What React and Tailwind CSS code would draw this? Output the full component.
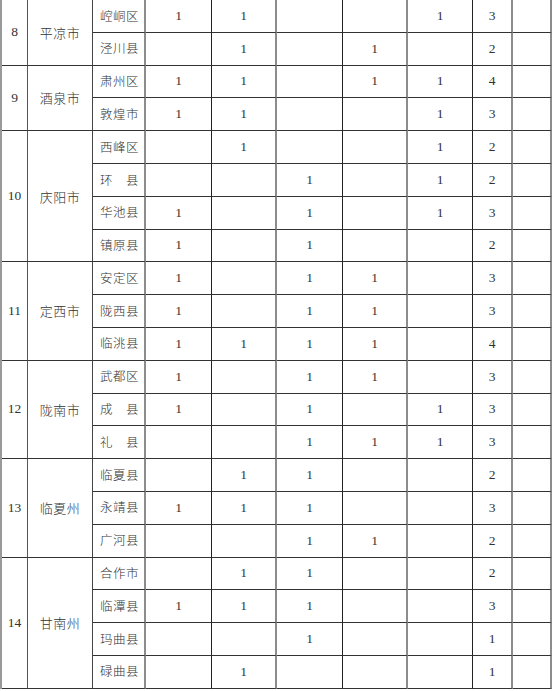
import React from "react";

const groups = [
  { idx: 8, city: "平凉市", rows: [["崆峒区", [1, 1, 0, 0, 1], 3], ["泾川县", [0, 1, 0, 1, 0], 2]] },
  { idx: 9, city: "酒泉市", rows: [["肃州区", [1, 1, 0, 1, 1], 4], ["敦煌市", [1, 1, 0, 0, 1], 3]] },
  {
    idx: 10,
    city: "庆阳市",
    rows: [
      ["西峰区", [0, 1, 0, 0, 1], 2],
      ["环　县", [0, 0, 1, 0, 1], 2],
      ["华池县", [1, 0, 1, 0, 1], 3],
      ["镇原县", [1, 0, 1, 0, 0], 2],
    ],
  },
  {
    idx: 11,
    city: "定西市",
    rows: [
      ["安定区", [1, 0, 1, 1, 0], 3],
      ["陇西县", [1, 0, 1, 1, 0], 3],
      ["临洮县", [1, 1, 1, 1, 0], 4],
    ],
  },
  {
    idx: 12,
    city: "陇南市",
    rows: [
      ["武都区", [1, 0, 1, 1, 0], 3],
      ["成　县", [1, 0, 1, 0, 1], 3],
      ["礼　县", [0, 0, 1, 1, 1], 3],
    ],
  },
  {
    idx: 13,
    city: "临夏州",
    rows: [
      ["临夏县", [0, 1, 1, 0, 0], 2],
      ["永靖县", [1, 1, 1, 0, 0], 3],
      ["广河县", [0, 0, 1, 1, 0], 2],
    ],
  },
  {
    idx: 14,
    city: "甘南州",
    rows: [
      ["合作市", [0, 1, 1, 0, 0], 2],
      ["临潭县", [1, 1, 1, 0, 0], 3],
      ["玛曲县", [0, 0, 1, 0, 0], 1],
      ["碌曲县", [0, 1, 0, 0, 0], 1],
    ],
  },
];

const colBorder = [
  "border-r border-r-[#555]",
  "border-r border-r-[#444]",
  "border-r-2 border-r-[#8c8c8c]",
  "border-r border-r-[#222]",
  "border-r-2 border-r-[#8c8c8c]",
  "border-r border-r-[#222]",
  "border-r-2 border-r-[#8c8c8c]",
  "border-r border-r-[#222]",
  "border-r-2 border-r-[#8c8c8c]",
  "border-r-2 border-r-[#8c8c8c]",
];

const spanCls = { 2: "row-span-2", 3: "row-span-3", 4: "row-span-4" };

const cjk = "font-['Noto_Sans_CJK_SC',sans-serif] font-light";
const num = "font-['Liberation_Serif',serif]";

export default function App() {
  const cells = [];
  groups.forEach((g) => {
    const n = g.rows.length;
    cells.push(
      <div
        key={`i${g.idx}`}
        className={`${spanCls[n]} ${colBorder[0]} border-b border-b-[#333] flex items-center justify-center ${num} text-[13.5px] text-[#333]`}
      >
        {g.idx}
      </div>
    );
    cells.push(
      <div
        key={`c${g.idx}`}
        className={`${spanCls[n]} ${colBorder[1]} border-b border-b-[#333] flex items-center justify-center ${cjk} text-[13px] tracking-[0.5px] text-[#333]`}
      >
        {g.city}
      </div>
    );
    g.rows.forEach(([name, vals, total], ri) => {
      cells.push(
        <div
          key={`n${g.idx}-${ri}`}
          className={`${colBorder[2]} border-b border-b-[#333] flex items-center pl-[7px] ${cjk} text-[12.5px] tracking-[0.5px] text-[#333] whitespace-nowrap`}
        >
          {name}
        </div>
      );
      vals.forEach((v, vi) => {
        cells.push(
          <div
            key={`v${g.idx}-${ri}-${vi}`}
            className={`${colBorder[3 + vi]} border-b border-b-[#333] flex items-center justify-center ${num} text-[13.5px] text-[#333]`}
          >
            {v ? "1" : ""}
          </div>
        );
      });
      cells.push(
        <div
          key={`t${g.idx}-${ri}`}
          className={`${colBorder[8]} border-b border-b-[#333] flex items-center justify-center ${num} text-[13.5px] text-[#333]`}
        >
          {total}
        </div>
      );
      cells.push(
        <div key={`e${g.idx}-${ri}`} className={`${colBorder[9]} border-b border-b-[#333]`} />
      );
    });
  });

  return (
    <div className="bg-white w-[553px] h-[691px] overflow-hidden">
      <div className="w-fit border-l-2 border-l-[#999] grid grid-cols-[26px_65px_53px_66px_65px_66px_65px_65px_40px_39px] grid-rows-[repeat(21,32.8px)]">
        {cells}
      </div>
    </div>
  );
}
